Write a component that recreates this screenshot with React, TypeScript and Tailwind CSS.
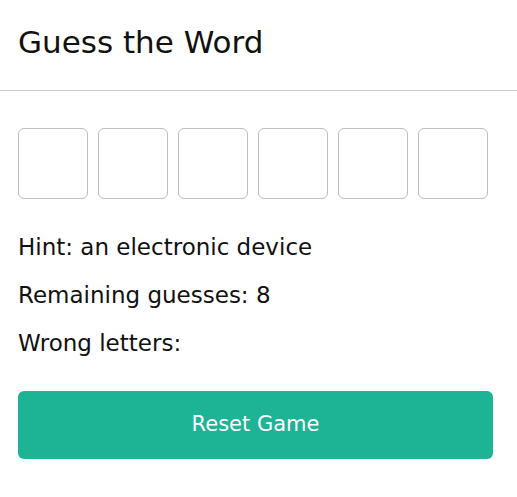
import React from 'react';

const LETTERS = 6;

const App: React.FC = () => {
  return (
    <div className="min-h-screen bg-white text-[#111] font-['DejaVu_Sans',sans-serif]">
      <header className="h-[91px] border-b border-[#cfcfcf] px-[18px] pt-[22px]">
        <h1 className="text-[31px] leading-[40px] font-normal">Guess the Word</h1>
      </header>
      <main className="px-[18px] pt-[37px]">
        <div className="flex gap-[10px]">
          {Array.from({ length: LETTERS }).map((_, i) => (
            <div key={i} className="h-[71px] w-[70px] rounded-[6px] border border-[#bdbdbd]" />
          ))}
        </div>
        <div className="mt-[32px] space-y-[16px] text-[23px] leading-[32px]">
          <p>Hint: an electronic device</p>
          <p>Remaining guesses: 8</p>
          <p>Wrong letters:</p>
        </div>
        <button className="mt-[32px] h-[68px] w-[475px] rounded-[6px] bg-[#1db395] text-[21px] text-white">
          Reset Game
        </button>
      </main>
    </div>
  );
};

export default App;
